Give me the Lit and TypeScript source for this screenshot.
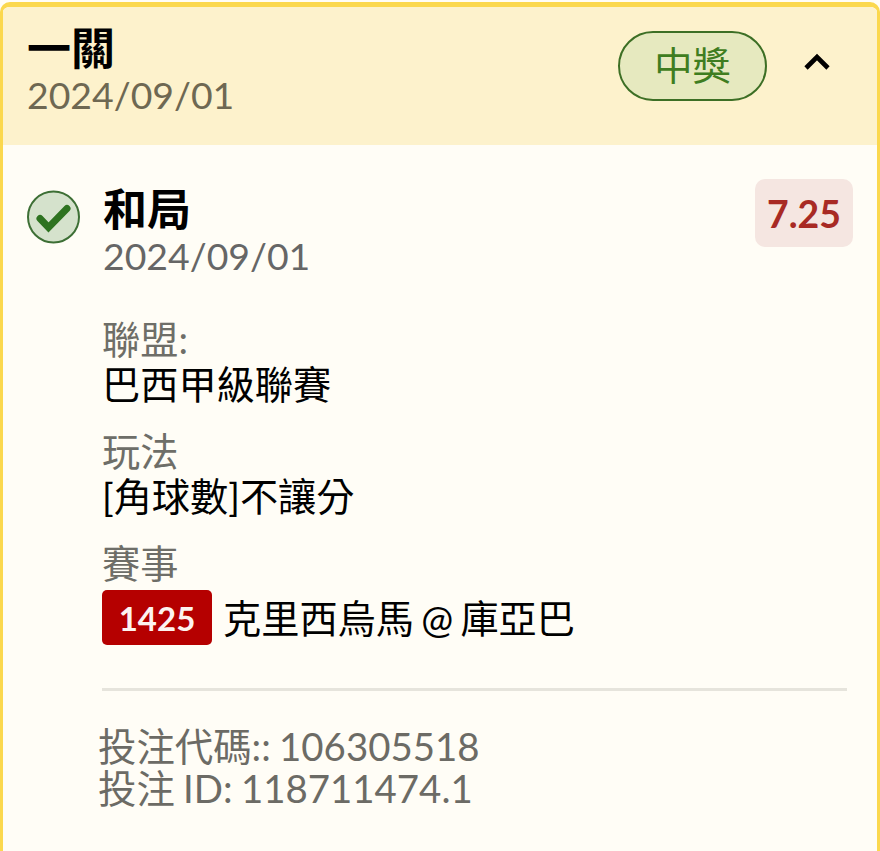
import { LitElement, html, css } from "lit";
import { customElement } from "lit/decorators.js";

@customElement("app-root")
export class AppRoot extends LitElement {
  static styles = css`
    :host {
      display: block;
      height: 851px;
      overflow: hidden;
      background: #fffdf6;
      font-family: Lato, "Noto Sans CJK TC", sans-serif;
      color: #000;
    }
    .card {
      margin-top: 2px;
      height: 900px;
      box-sizing: border-box;
      border: 3px solid #fbd84e;
      border-top-width: 5px;
      border-radius: 10px 10px 0 0;
      background: #fffdf6;
      overflow: hidden;
    }
    .header {
      height: 138px;
      box-sizing: border-box;
      background: #fdf2cc;
      display: flex;
      align-items: flex-start;
      padding: 16px 46px 0 24px;
    }
    .head-text { flex: 1; }
    .h-title { font-size: 44px; font-weight: 700; line-height: 50px; }
    .h-date { font-size: 37.4px; line-height: 44px; color: #6e6852; }
    .pill {
      margin-top: 8px;
      width: 149px;
      height: 70px;
      box-sizing: border-box;
      border: 2px solid #3d6f25;
      border-radius: 35px;
      background: #e6e9bf;
      color: #3f7d20;
      font-size: 38.2px;
      padding-bottom: 5px;
      display: flex;
      align-items: center;
      justify-content: center;
    }
    .chev { margin: 29px 0 0 36px; width: 28px; height: 20px; display: block; }
    .body { padding: 34px 24px 0; }
    .row { display: flex; align-items: flex-start; }
    .check { width: 54px; height: 54px; margin-top: 11px; flex: none; display: block; }
    .main { flex: 1; margin-left: 22px; }
    .title { font-size: 44px; font-weight: 700; line-height: 50px; margin-top: 5px; }
    .date { font-size: 37.4px; line-height: 44px; color: #666; }
    .odds {
      width: 98px;
      height: 68px;
      border-radius: 10px;
      background: #f5e6e1;
      color: #a82a24;
      font-size: 37.4px;
      font-weight: 700;
      display: flex;
      align-items: center;
      justify-content: center;
    }
    .field { margin: 0 0 0 75px; }
    .fields { display: flex; flex-direction: column; gap: 22px; margin-top: 39px; }
    .label { font-size: 38.2px; line-height: 44px; color: #6e6e68; }
    .value { font-size: 38.2px; line-height: 46px; color: #000; display: flex; align-items: center; word-spacing: -2.5px; }
    .value.match { margin-top: 5px; }
    .code {
      width: 110px;
      height: 55px;
      border-radius: 5px;
      background: #b50000;
      color: #fdf3f0;
      font-size: 33px;
      font-weight: 700;
      display: flex;
      align-items: center;
      justify-content: center;
      margin-right: 11px;
    }
    hr {
      margin: 43px 6px 0 75px;
      border: 0;
      height: 3px;
      background: #e6e4dc;
    }
    .foot { margin: 35px 0 0 71px; font-size: 38.4px; line-height: 41.5px; color: #6c6b65; word-spacing: -1.5px; }
  `;

  render() {
    return html`
      <div class="card">
        <div class="header">
          <div class="head-text">
            <div class="h-title">一關</div>
            <div class="h-date">2024/09/01</div>
          </div>
          <div class="pill">中獎</div>
          <svg class="chev" viewBox="0 0 28 20" fill="none">
            <path d="M3 16 L14 5 L25 16" stroke="#000" stroke-width="4.6" />
          </svg>
        </div>
        <div class="body">
          <div class="row">
            <svg class="check" viewBox="0 0 54 54">
              <circle cx="26.5" cy="27" r="25.5" fill="#d5e2cc" stroke="#3d6f35" stroke-width="2" />
              <path d="M13 28.5 L21.5 37.5 L40 18.5" fill="none" stroke="#2e7320" stroke-width="7" stroke-linecap="round" stroke-linejoin="miter" />
            </svg>
            <div class="main">
              <div class="title">和局</div>
              <div class="date">2024/09/01</div>
            </div>
            <div class="odds">7.25</div>
          </div>
          <div class="fields">
            <div class="field">
              <div class="label">聯盟:</div>
              <div class="value">巴西甲級聯賽</div>
            </div>
            <div class="field">
              <div class="label">玩法</div>
              <div class="value">[角球數]不讓分</div>
            </div>
            <div class="field">
              <div class="label">賽事</div>
              <div class="value match"><span class="code">1425</span>克里西烏馬 @ 庫亞巴</div>
            </div>
          </div>
          <hr />
          <div class="foot">
            <div>投注代碼:: 106305518</div>
            <div>投注 ID: 118711474.1</div>
          </div>
        </div>
      </div>
    `;
  }
}
